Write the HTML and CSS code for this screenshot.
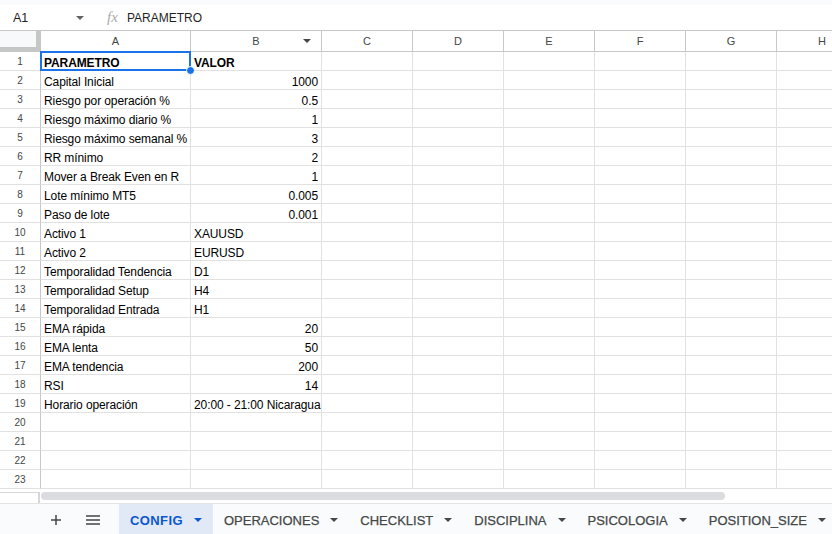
FILE: index.html
```html
<!DOCTYPE html>
<html lang="es">
<head>
  <meta charset="UTF-8" />
  <title>CONFIG - Hoja de cálculo</title>
  <link rel="stylesheet" href="styles.css">
</head>
<body>
  <div class="top-strip"></div>

  <div class="formula-bar">
    <div class="name-box">A1 <span class="caret"></span></div>
    <div class="fx">fx</div>
    <div class="formula">PARAMETRO</div>
  </div>

  <div class="sheet">
    <div class="row head">
      <div class="corner"></div>
      <div class="col">A</div>
      <div class="col filter">B <span class="caret"></span></div>
      <div class="col">C</div>
      <div class="col">D</div>
      <div class="col">E</div>
      <div class="col">F</div>
      <div class="col">G</div>
      <div class="col">H</div>
    </div>

    <div class="row"><div class="num">1</div><div class="cell bold selected">PARAMETRO</div><div class="cell bold">VALOR</div><div></div><div></div><div></div><div></div><div></div><div></div></div>
    <div class="row"><div class="num">2</div><div class="cell">Capital Inicial</div><div class="cell right">1000</div><div></div><div></div><div></div><div></div><div></div><div></div></div>
    <div class="row"><div class="num">3</div><div class="cell">Riesgo por operación %</div><div class="cell right">0.5</div><div></div><div></div><div></div><div></div><div></div><div></div></div>
    <div class="row"><div class="num">4</div><div class="cell">Riesgo máximo diario %</div><div class="cell right">1</div><div></div><div></div><div></div><div></div><div></div><div></div></div>
    <div class="row"><div class="num">5</div><div class="cell">Riesgo máximo semanal %</div><div class="cell right">3</div><div></div><div></div><div></div><div></div><div></div><div></div></div>
    <div class="row"><div class="num">6</div><div class="cell">RR mínimo</div><div class="cell right">2</div><div></div><div></div><div></div><div></div><div></div><div></div></div>
    <div class="row"><div class="num">7</div><div class="cell">Mover a Break Even en R</div><div class="cell right">1</div><div></div><div></div><div></div><div></div><div></div><div></div></div>
    <div class="row"><div class="num">8</div><div class="cell">Lote mínimo MT5</div><div class="cell right">0.005</div><div></div><div></div><div></div><div></div><div></div><div></div></div>
    <div class="row"><div class="num">9</div><div class="cell">Paso de lote</div><div class="cell right">0.001</div><div></div><div></div><div></div><div></div><div></div><div></div></div>
    <div class="row"><div class="num">10</div><div class="cell">Activo 1</div><div class="cell">XAUUSD</div><div></div><div></div><div></div><div></div><div></div><div></div></div>
    <div class="row"><div class="num">11</div><div class="cell">Activo 2</div><div class="cell">EURUSD</div><div></div><div></div><div></div><div></div><div></div><div></div></div>
    <div class="row"><div class="num">12</div><div class="cell">Temporalidad Tendencia</div><div class="cell">D1</div><div></div><div></div><div></div><div></div><div></div><div></div></div>
    <div class="row"><div class="num">13</div><div class="cell">Temporalidad Setup</div><div class="cell">H4</div><div></div><div></div><div></div><div></div><div></div><div></div></div>
    <div class="row"><div class="num">14</div><div class="cell">Temporalidad Entrada</div><div class="cell">H1</div><div></div><div></div><div></div><div></div><div></div><div></div></div>
    <div class="row"><div class="num">15</div><div class="cell">EMA rápida</div><div class="cell right">20</div><div></div><div></div><div></div><div></div><div></div><div></div></div>
    <div class="row"><div class="num">16</div><div class="cell">EMA lenta</div><div class="cell right">50</div><div></div><div></div><div></div><div></div><div></div><div></div></div>
    <div class="row"><div class="num">17</div><div class="cell">EMA tendencia</div><div class="cell right">200</div><div></div><div></div><div></div><div></div><div></div><div></div></div>
    <div class="row"><div class="num">18</div><div class="cell">RSI</div><div class="cell right">14</div><div></div><div></div><div></div><div></div><div></div><div></div></div>
    <div class="row"><div class="num">19</div><div class="cell">Horario operación</div><div class="cell">20:00 - 21:00 Nicaragua</div><div></div><div></div><div></div><div></div><div></div><div></div></div>
    <div class="row"><div class="num">20</div><div></div><div></div><div></div><div></div><div></div><div></div><div></div><div></div></div>
    <div class="row"><div class="num">21</div><div></div><div></div><div></div><div></div><div></div><div></div><div></div><div></div></div>
    <div class="row"><div class="num">22</div><div></div><div></div><div></div><div></div><div></div><div></div><div></div><div></div></div>
    <div class="row"><div class="num">23</div><div></div><div></div><div></div><div></div><div></div><div></div><div></div><div></div></div>
  </div>

  <div class="scroll">
    <div class="scroll-corner"></div>
    <div class="thumb"></div>
  </div>

  <div class="tabs">
    <div class="tab-btn">
      <svg width="12" height="12" viewBox="0 0 12 12"><path d="M6 1v10M1 6h10" stroke="#444746" stroke-width="1.5" fill="none"/></svg>
    </div>
    <div class="tab-btn">
      <svg width="14" height="10" viewBox="0 0 14 10"><path d="M0 1h14M0 5h14M0 9h14" stroke="#444746" stroke-width="1.5" fill="none"/></svg>
    </div>
    <div class="tab active">CONFIG <span class="caret"></span></div>
    <div class="tab">OPERACIONES <span class="caret"></span></div>
    <div class="tab">CHECKLIST <span class="caret"></span></div>
    <div class="tab">DISCIPLINA <span class="caret"></span></div>
    <div class="tab">PSICOLOGIA <span class="caret"></span></div>
    <div class="tab">POSITION_SIZE <span class="caret"></span></div>
  </div>
</body>
</html>
```

FILE: styles.css
```css
body {
  margin: 0;
  width: 832px;
  height: 534px;
  overflow: hidden;
  font-family: 'Liberation Sans', Arial, sans-serif;
  font-size: 13px;
  color: #000;
  background: #fff;
}

.top-strip {
  height: 5px;
  background: #f9fbfd;
}

.caret {
  display: inline-block;
  width: 0;
  height: 0;
  border-left: 4px solid transparent;
  border-right: 4px solid transparent;
  border-top: 4px solid #5f6368;
  vertical-align: middle;
}

/* barra de fórmulas */
.formula-bar {
  display: flex;
  align-items: center;
  height: 25px;
  border-bottom: 1px solid #c7c7c7;
}

.name-box {
  width: 94px;
  padding-left: 13px;
  box-sizing: border-box;
  display: flex;
  justify-content: space-between;
  align-items: center;
  padding-right: 10px;
  color: #1f1f1f;
  font-size: 12.5px;
}

.fx {
  font-family: 'Liberation Serif', serif;
  font-style: italic;
  font-size: 15px;
  color: #aaa;
  margin-left: 13px;
  width: 20px;
}

.formula {
  color: #1f1f1f;
  font-size: 12px;
}

/* hoja */
.sheet {
  width: 868px;
}

.row {
  display: grid;
  grid-template-columns: 41px 150px 131px repeat(6, 91px);
  height: 19px;
}

.row > div {
  box-sizing: border-box;
  border-right: 1px solid #e1e1e1;
  border-bottom: 1px solid #e1e1e1;
  white-space: nowrap;
  overflow: visible;
  padding: 4px 3px 0;
  line-height: 14px;
  font-size: 12px;
  letter-spacing: -0.1px;
}

.row.head {
  height: 21px;
}

.row.head > div {
  border-right-color: #c7c7c7;
  border-bottom-color: #c7c7c7;
  font-size: 11px;
  letter-spacing: 0;
  color: #444746;
  text-align: center;
  padding-top: 2px;
  line-height: 17px;
}

.row.head .corner {
  background: #f8f9fa;
  border-right: 5px solid #c4c7c5;
  border-bottom: 5px solid #c4c7c5;
}

.row.head .filter {
  position: relative;
}

.row.head .filter .caret {
  position: absolute;
  right: 10px;
  top: 8px;
  border-top-color: #444746;
}

.row > .num {
  border-right-color: #c7c7c7;
  font-size: 10px;
  letter-spacing: 0;
  color: #444746;
  text-align: center;
  padding-top: 3px;
}

.bold {
  font-weight: bold;
  letter-spacing: -0.3px;
}

.right { text-align: right; }

.selected {
  position: relative;
}

.selected::after {
  content: "";
  position: absolute;
  left: -1px;
  top: -1px;
  right: -1px;
  bottom: -1px;
  border: 2px solid #1a73e8;
}

.selected::before {
  content: "";
  position: absolute;
  right: -5px;
  bottom: -5px;
  width: 9px;
  height: 9px;
  border-radius: 50%;
  background: #1a73e8;
  border: 1px solid #fff;
  box-sizing: border-box;
  z-index: 1;
}

/* barra de desplazamiento */
.scroll {
  height: 14px;
  display: flex;
  align-items: flex-start;
  border-bottom: 1px solid #e3e3e3;
}

.scroll-corner {
  width: 40px;
  height: 11px;
  margin-top: 3px;
  border-top: 1px solid #d7d7d7;
  border-right: 2px solid #d7d7d7;
  box-sizing: border-box;
}

.thumb {
  margin: 3px 0 0 1px;
  width: 684px;
  height: 8px;
  border-radius: 4px;
  background: #dadce0;
}

/* pestañas */
.tabs {
  display: flex;
  align-items: stretch;
  height: 31px;
  background: #f9fbfd;
  padding-left: 47px;
}

.tabs > div {
  flex-shrink: 0;
}

.tab-btn {
  width: 36px;
  display: flex;
  align-items: center;
  justify-content: flex-start;
  padding-left: 3px;
  box-sizing: border-box;
}

.tab {
  display: flex;
  align-items: center;
  gap: 11px;
  padding: 1px 11px 0;
  font-size: 13px;
  color: #444746;
  -webkit-text-stroke: 0.25px #444746;
}

.tab .caret {
  border-top-color: #444746;
  margin-right: 0;
}

.tab.active {
  background: #e1e9f7;
  color: #0b57d0;
  font-weight: bold;
  letter-spacing: 0.4px;
  -webkit-text-stroke: 0;
}

.tab.active .caret {
  border-top-color: #0b57d0;
}
```
